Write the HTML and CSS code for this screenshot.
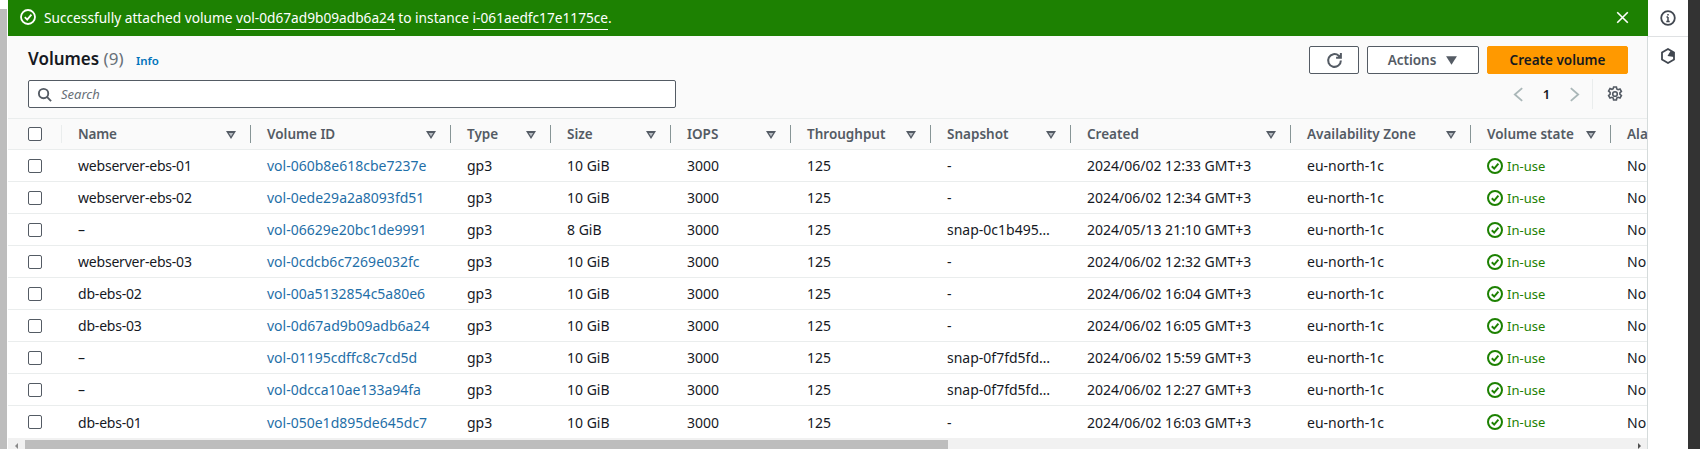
FILE: index.html
```html
<!DOCTYPE html>
<html lang="en">
<head>
<meta charset="utf-8">
<title>Volumes</title>
<link rel="stylesheet" href="styles.css">
</head>
<body>
<div class="app">
  <div class="gutter"><div class="gutter-bar"></div></div>
  <main class="main">
    <div class="flash">
      <svg class="flash-icon" viewBox="0 0 16 16"><circle cx="8" cy="8" r="7"/><path d="M4.8 8.2 7.2 10.6 11.400 5.600"/></svg>
      <span class="flash-text">Successfully attached volume <a>vol-0d67ad9b09adb6a24</a> to instance <a>i-061aedfc17e1175ce</a>.</span>
      <svg class="flash-close" viewBox="0 0 16 16"><path d="M1.500 1.500 14.500 14.500M14.500 1.500 1.500 14.500"/></svg>
    </div>
    <section class="panel">
      <div class="head">
        <div class="head-left">
          <h1 class="title">Volumes <span class="count">(9)</span> <a class="info">Info</a></h1>
          <div class="search">
            <svg class="search-icon" viewBox="0 0 16 16"><circle cx="7" cy="7" r="5"/><path d="M10.600 10.600 15 15"/></svg>
            <span class="search-ph">Search</span>
          </div>
        </div>
        <div class="head-right">
          <div class="actions">
            <button class="btn btn-icon"><svg class="ico" viewBox="0 0 16 16"><path d="M14 8a6 6 0 1 1-2-4.500L14 5.500M14 1v4.500H9.500"/></svg></button>
            <button class="btn btn-actions">Actions <svg class="caret" viewBox="0 0 12 10"><path d="M1 1h10L6 9z"/></svg></button>
            <button class="btn btn-primary">Create volume</button>
          </div>
          <div class="pager">
            <svg class="chev" viewBox="0 0 12 16"><path d="M10 1 2 8l8 7"/></svg>
            <span class="page">1</span>
            <svg class="chev" viewBox="0 0 12 16"><path d="M2 1l8 7-8 7"/></svg>
            <span class="pager-sep"></span>
            <svg class="gear" viewBox="0 0 16 16"><path d="M6.600 1h2.800l.4 2 1.300.7 1.900-.7 1.400 2.400-1.500 1.400v1.400l1.500 1.400-1.400 2.400-1.900-.7-1.300.7-.4 2H6.600l-.4-2-1.300-.7-1.900.7-1.400-2.400 1.500-1.400V6.400L1.600 5 3 2.600l1.900.7 1.300-.7z"/><circle cx="8" cy="8" r="2.300"/></svg>
          </div>
        </div>
      </div>
      <div class="table">
        <div class="row row-head">
          <div class="c c-check"><span class="box"></span></div>
          <div class="c c-name">Name<i class="sort"></i></div>
          <div class="c c-id">Volume ID<i class="sort"></i></div>
          <div class="c c-type">Type<i class="sort"></i></div>
          <div class="c c-size">Size<i class="sort"></i></div>
          <div class="c c-iops">IOPS<i class="sort"></i></div>
          <div class="c c-thr">Throughput<i class="sort"></i></div>
          <div class="c c-snap">Snapshot<i class="sort"></i></div>
          <div class="c c-created">Created<i class="sort"></i></div>
          <div class="c c-az">Availability Zone<i class="sort"></i></div>
          <div class="c c-state">Volume state<i class="sort"></i></div>
          <div class="c c-alarm">Alarm status</div>
        </div>
        <div class="row">
          <div class="c c-check"><span class="box"></span></div><div class="c c-name">webserver-ebs-01</div><div class="c c-id"><a>vol-060b8e618cbe7237e</a></div><div class="c c-type">gp3</div><div class="c c-size">10 GiB</div><div class="c c-iops">3000</div><div class="c c-thr">125</div><div class="c c-snap">-</div><div class="c c-created">2024/06/02 12:33 GMT+3</div><div class="c c-az">eu-north-1c</div><div class="c c-state"><svg class="ok" viewBox="0 0 16 16"><circle cx="8" cy="8" r="7"/><path d="M4.800 8.200 7.200 10.600 11.400 5.600"/></svg>In-use</div><div class="c c-alarm">No alarms</div>
        </div>
        <div class="row">
          <div class="c c-check"><span class="box"></span></div><div class="c c-name">webserver-ebs-02</div><div class="c c-id"><a>vol-0ede29a2a8093fd51</a></div><div class="c c-type">gp3</div><div class="c c-size">10 GiB</div><div class="c c-iops">3000</div><div class="c c-thr">125</div><div class="c c-snap">-</div><div class="c c-created">2024/06/02 12:34 GMT+3</div><div class="c c-az">eu-north-1c</div><div class="c c-state"><svg class="ok" viewBox="0 0 16 16"><circle cx="8" cy="8" r="7"/><path d="M4.800 8.200 7.200 10.600 11.400 5.600"/></svg>In-use</div><div class="c c-alarm">No alarms</div>
        </div>
        <div class="row">
          <div class="c c-check"><span class="box"></span></div><div class="c c-name">–</div><div class="c c-id"><a>vol-06629e20bc1de9991</a></div><div class="c c-type">gp3</div><div class="c c-size">8 GiB</div><div class="c c-iops">3000</div><div class="c c-thr">125</div><div class="c c-snap">snap-0c1b495…</div><div class="c c-created">2024/05/13 21:10 GMT+3</div><div class="c c-az">eu-north-1c</div><div class="c c-state"><svg class="ok" viewBox="0 0 16 16"><circle cx="8" cy="8" r="7"/><path d="M4.800 8.200 7.200 10.600 11.400 5.600"/></svg>In-use</div><div class="c c-alarm">No alarms</div>
        </div>
        <div class="row">
          <div class="c c-check"><span class="box"></span></div><div class="c c-name">webserver-ebs-03</div><div class="c c-id"><a>vol-0cdcb6c7269e032fc</a></div><div class="c c-type">gp3</div><div class="c c-size">10 GiB</div><div class="c c-iops">3000</div><div class="c c-thr">125</div><div class="c c-snap">-</div><div class="c c-created">2024/06/02 12:32 GMT+3</div><div class="c c-az">eu-north-1c</div><div class="c c-state"><svg class="ok" viewBox="0 0 16 16"><circle cx="8" cy="8" r="7"/><path d="M4.800 8.200 7.200 10.600 11.400 5.600"/></svg>In-use</div><div class="c c-alarm">No alarms</div>
        </div>
        <div class="row">
          <div class="c c-check"><span class="box"></span></div><div class="c c-name">db-ebs-02</div><div class="c c-id"><a>vol-00a5132854c5a80e6</a></div><div class="c c-type">gp3</div><div class="c c-size">10 GiB</div><div class="c c-iops">3000</div><div class="c c-thr">125</div><div class="c c-snap">-</div><div class="c c-created">2024/06/02 16:04 GMT+3</div><div class="c c-az">eu-north-1c</div><div class="c c-state"><svg class="ok" viewBox="0 0 16 16"><circle cx="8" cy="8" r="7"/><path d="M4.800 8.200 7.200 10.600 11.400 5.600"/></svg>In-use</div><div class="c c-alarm">No alarms</div>
        </div>
        <div class="row">
          <div class="c c-check"><span class="box"></span></div><div class="c c-name">db-ebs-03</div><div class="c c-id"><a>vol-0d67ad9b09adb6a24</a></div><div class="c c-type">gp3</div><div class="c c-size">10 GiB</div><div class="c c-iops">3000</div><div class="c c-thr">125</div><div class="c c-snap">-</div><div class="c c-created">2024/06/02 16:05 GMT+3</div><div class="c c-az">eu-north-1c</div><div class="c c-state"><svg class="ok" viewBox="0 0 16 16"><circle cx="8" cy="8" r="7"/><path d="M4.800 8.200 7.200 10.600 11.400 5.600"/></svg>In-use</div><div class="c c-alarm">No alarms</div>
        </div>
        <div class="row">
          <div class="c c-check"><span class="box"></span></div><div class="c c-name">–</div><div class="c c-id"><a>vol-01195cdffc8c7cd5d</a></div><div class="c c-type">gp3</div><div class="c c-size">10 GiB</div><div class="c c-iops">3000</div><div class="c c-thr">125</div><div class="c c-snap">snap-0f7fd5fd…</div><div class="c c-created">2024/06/02 15:59 GMT+3</div><div class="c c-az">eu-north-1c</div><div class="c c-state"><svg class="ok" viewBox="0 0 16 16"><circle cx="8" cy="8" r="7"/><path d="M4.800 8.200 7.200 10.600 11.400 5.600"/></svg>In-use</div><div class="c c-alarm">No alarms</div>
        </div>
        <div class="row">
          <div class="c c-check"><span class="box"></span></div><div class="c c-name">–</div><div class="c c-id"><a>vol-0dcca10ae133a94fa</a></div><div class="c c-type">gp3</div><div class="c c-size">10 GiB</div><div class="c c-iops">3000</div><div class="c c-thr">125</div><div class="c c-snap">snap-0f7fd5fd…</div><div class="c c-created">2024/06/02 12:27 GMT+3</div><div class="c c-az">eu-north-1c</div><div class="c c-state"><svg class="ok" viewBox="0 0 16 16"><circle cx="8" cy="8" r="7"/><path d="M4.800 8.200 7.200 10.600 11.400 5.600"/></svg>In-use</div><div class="c c-alarm">No alarms</div>
        </div>
        <div class="row row-last">
          <div class="c c-check"><span class="box"></span></div><div class="c c-name">db-ebs-01</div><div class="c c-id"><a>vol-050e1d895de645dc7</a></div><div class="c c-type">gp3</div><div class="c c-size">10 GiB</div><div class="c c-iops">3000</div><div class="c c-thr">125</div><div class="c c-snap">-</div><div class="c c-created">2024/06/02 16:03 GMT+3</div><div class="c c-az">eu-north-1c</div><div class="c c-state"><svg class="ok" viewBox="0 0 16 16"><circle cx="8" cy="8" r="7"/><path d="M4.800 8.200 7.200 10.600 11.400 5.600"/></svg>In-use</div><div class="c c-alarm">No alarms</div>
        </div>
      </div>
      <div class="hscroll"><span class="arrow-l"></span><span class="thumb"></span><span class="arrow-r"></span></div>
    </section>
  </main>
  <aside class="side">
    <div class="side-top">
      <svg class="side-ico" viewBox="0 0 16 16"><circle cx="8" cy="8" r="6.800"/><path class="thin" d="M8 7v4.500M6.300 11.500h3.400M6.500 7H8M8 4v1.500"/></svg>
    </div>
    <div class="side-item">
      <svg class="side-ico" viewBox="0 0 16 16"><path d="M8 1l6 3.400v7.200L8 15l-6-3.400V4.400z"/><path class="fill" d="M7.500 8 10.500 3 14 4.400V9z"/></svg>
    </div>
  </aside>
  <div class="edge"></div>
</div>
</body>
</html>
```
FILE: styles.css
```css
* { box-sizing: border-box; }
html, body { margin: 0; height: 100%; }
body { overflow: hidden; font-family: "Noto Sans", "Open Sans", sans-serif; font-size: 14px; color: #16191f; background: #fff; }
.app { display: flex; width: 1700px; height: 449px; }
.gutter { width: 8px; flex: none; background: #fff; padding-top: 9px; }
.gutter-bar { width: 7px; height: 100%; background: #bdbdbd; }
.main { width: 1640px; flex: none; display: flex; flex-direction: column; background: #fff; min-width: 0; }
.flash { height: 36px; flex: none; background: #1d8102; color: #fff; display: flex; align-items: center; padding: 0 19px 2px 12px; }
.flash-icon { width: 16px; height: 16px; fill: none; stroke: #fff; stroke-width: 1.800; margin-right: 8px; flex: none; }
.flash-text { flex: 1; font-size: 13.700px; white-space: nowrap; }
.flash-text a { border-bottom: 1px solid #fff; padding-bottom: 2px; }
.flash-close { width: 13px; height: 13px; fill: none; stroke: #fff; stroke-width: 2; }
.panel { flex: 1; min-height: 0; display: flex; flex-direction: column; overflow: hidden; border-right: 1px solid #d5dbdb; }
.head { height: 83px; flex: none; background: #fafafa; display: flex; justify-content: space-between; padding: 10px 19px 0 20px; border-bottom: 1px solid #eaeded; }
.head-left { display: flex; flex-direction: column; }
.title { margin: 0; height: 26px; font-size: 17px; font-weight: 600; line-height: 26px; white-space: nowrap; }
.count { font-weight: 400; color: #687078; }
.info { font-size: 11.500px; color: #0073bb; margin-left: 8px; font-weight: 600; }
.search { width: 648px; height: 28px; margin-top: 8px; background: #fff; border: 1px solid #545b64; border-radius: 2px; display: flex; align-items: center; padding-left: 8px; }
.search-icon { width: 15px; height: 15px; fill: none; stroke: #545b64; stroke-width: 2; flex: none; }
.search-ph { margin-left: 9px; font-size: 13px; font-style: italic; color: #687078; }
.head-right { display: flex; flex-direction: column; align-items: flex-end; }
.actions { display: flex; gap: 8px; height: 28px; }
.btn { font: inherit; font-size: 13.500px; height: 28px; border-radius: 2px; border: 1px solid #545b64; background: #fff; color: #545b64; font-weight: 600; display: flex; align-items: center; justify-content: center; padding: 0; }
.btn-icon { width: 50px; }
.btn-actions { width: 112px; gap: 9px; }
.btn-primary { width: 141px; background: #ff9900; border-color: #ff9900; color: #16191f; }
.ico { width: 17px; height: 17px; fill: none; stroke: #545b64; stroke-width: 1.900; }
.caret { width: 13px; height: 11px; fill: #545b64; }
.pager { display: flex; align-items: center; height: 30px; margin-top: 5px; padding-right: 5px; }
.chev { width: 11px; height: 15px; fill: none; stroke: #aab7b8; stroke-width: 2; flex: none; }
.page { width: 45px; text-align: center; font-weight: 600; font-size: 13px; }
.pager-sep { width: 1px; height: 30px; background: #eaeded; margin: 0 14px 0 12px; }
.gear { width: 16px; height: 16px; fill: none; stroke: #545b64; stroke-width: 1.600; }
.table { flex: none; width: 1800px; }
.row { display: flex; height: 32px; background: #fff; border-bottom: 1px solid #eaeded; align-items: center; color: #16191f; }
.row-last { border-bottom: 0; }
.row-head { height: 31px; background: #fafafa; color: #545b64; font-weight: 600; font-size: 13.500px; }
.c { flex: none; height: 100%; display: flex; align-items: center; padding-left: 16px; white-space: nowrap; position: relative; }
.c a { color: #1f6fa8; }
.c-check { width: 54px; padding-left: 20px; }
.c-name { width: 189px; letter-spacing: -0.2px; }
.c-id { width: 200px; }
.c-type { width: 100px; }
.c-size { width: 120px; }
.c-iops { width: 120px; }
.c-thr { width: 140px; }
.c-snap { width: 140px; }
.c-created { width: 220px; }
.c-az { width: 180px; }
.c-state { width: 140px; }
.c-alarm { width: 200px; }
.box { width: 14px; height: 14px; border: 1px solid #545b64; border-radius: 2px; background: #fff; }
.sort { position: absolute; right: 15px; top: 12px; width: 10px; height: 8px; background: #545b64; clip-path: polygon(0 0,100% 0,50% 100%); }
.sort::before { content: ""; position: absolute; left: 2.500px; top: 1.500px; width: 5px; height: 4px; background: #b9bec4; clip-path: polygon(0 0,100% 0,50% 100%); }
.row-head .c:not(.c-alarm):not(.c-check)::after { content: ""; position: absolute; right: 0; top: 6px; bottom: 6px; width: 1px; background: #879596; }
.row-head .c-check::after { content: ""; position: absolute; right: 0; top: 6px; bottom: 6px; width: 1px; background: #eaeded; }
.ok { width: 16px; height: 16px; fill: none; stroke: #1d8102; stroke-width: 2; margin-right: 4px; flex: none; }
.row:not(.row-head) .c-state { color: #1d8102; font-size: 13px; }
.hscroll { height: 11px; flex: none; background: #f1f1f1; position: relative; }
.thumb { position: absolute; left: 17px; width: 923px; top: 2px; bottom: 0; background: #bdbdbd; }
.arrow-l { position: absolute; left: 7px; top: 5px; border: 3px solid transparent; border-left: 0; border-right: 3px solid #8a8a8a; }
.arrow-r { position: absolute; right: 6px; top: 5px; border: 3px solid transparent; border-right: 0; border-left: 3px solid #505050; }
.side { width: 40px; flex: none; background: #fff; }
.side-top { height: 37px; display: flex; align-items: center; justify-content: center; border-bottom: 1px solid #dfe1e3; }
.side-item { height: 37px; display: flex; align-items: center; justify-content: center; }
.side-ico { width: 16px; height: 16px; fill: none; stroke: #414750; stroke-width: 1.800; }
.side-ico .fill { fill: #414750; stroke: none; }
.side-ico .thin { stroke-width: 1.500; }
.edge { width: 12px; flex: none; background: #333; }
```
